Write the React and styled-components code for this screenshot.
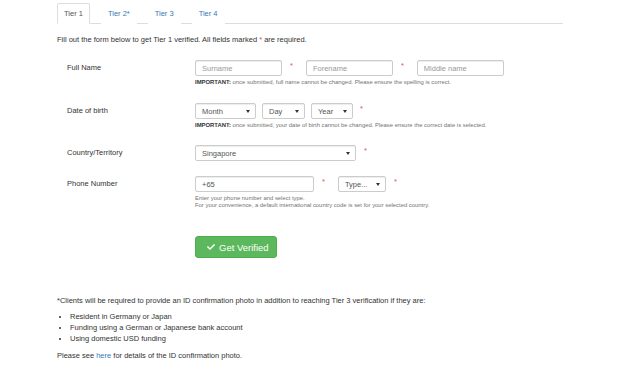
import React from 'react'
import styled, { createGlobalStyle } from 'styled-components'
import { FaCheck } from 'react-icons/fa'

const GlobalStyle = createGlobalStyle`
  body {
    margin: 0;
    background: #fff;
    font-family: 'Liberation Sans', Arial, sans-serif;
    color: #333;
  }
`

const Page = styled.div`
  width: 506px;
  margin-left: 57px;
  padding-top: 3px;
  font-size: 7.5px;
  line-height: 11px;
`

const Tabs = styled.ul`
  display: flex;
  gap: 11px;
  list-style: none;
  margin: 0;
  padding: 0;
  border-bottom: 1px solid #ddd;
`

const Tab = styled.li`
  margin-bottom: -1px;

  a {
    display: block;
    padding: 4px 6px;
    border: 1px solid ${props => props.$active ? '#ddd' : 'transparent'};
    border-bottom-color: ${props => props.$active ? '#fff' : 'transparent'};
    border-radius: 2px 2px 0 0;
    background: #fff;
    color: ${props => props.$active ? '#555' : '#337ab7'};
    text-decoration: none;
  }
`

const Intro = styled.p`
  margin: 8px 0 12px;
`

const Req = styled.span`
  color: #e0534f;
  margin: ${props => props.$inline ? '0' : '-2px 13px 0 8px'};
  line-height: 16px;
`

const FormRow = styled.div`
  display: grid;
  grid-template-columns: 138px 1fr;
  margin-bottom: ${props => props.$mb || 16}px;
`

const Label = styled.label`
  padding-left: 10px;
  line-height: 16px;
`

const Controls = styled.div`
  display: flex;
  flex-direction: column;
`

const Inline = styled.div`
  display: flex;
  align-items: flex-start;
  gap: ${props => props.$gap || 0}px;
`

const Input = styled.input`
  box-sizing: border-box;
  width: ${props => props.$w}px;
  height: 16px;
  padding: 0 6px;
  font-family: inherit;
  font-size: 7.5px;
  color: #555;
  background: #fff;
  border: 1px solid #ccc;
  border-radius: 2px;
  box-shadow: inset 0 1px 1px rgba(0, 0, 0, .075);
  outline: none;

  &::placeholder {
    color: #999;
  }
`

const Select = styled.div`
  box-sizing: border-box;
  width: ${props => props.$w}px;
  height: 16px;
  display: flex;
  align-items: center;
  justify-content: space-between;
  padding: 0 5px 0 6px;
  color: #555;
  background: #fff;
  border: 1px solid #ccc;
  border-radius: 2px;
  box-shadow: inset 0 1px 1px rgba(0, 0, 0, .075);

  &::after {
    content: '';
    border-left: 2px solid transparent;
    border-right: 2px solid transparent;
    border-top: 3px solid #333;
  }
`

const Help = styled.div`
  margin-top: 3px;
  font-size: 5.9px;
  line-height: 7px;
  color: #737373;

  b {
    color: #333;
  }
`

const Button = styled.button`
  display: inline-flex;
  align-items: center;
  gap: 4px;
  box-sizing: border-box;
  width: 82px;
  height: 22px;
  padding: 0 0 0 11px;
  margin: 11px 0 0 138px;
  font-family: inherit;
  font-size: 9.5px;
  color: #fff;
  background: #5cb85c;
  border: 1px solid #4cae4c;
  border-radius: 3px;

  svg {
    width: 8px;
    height: 8px;
  }
`

const Notes = styled.div`
  margin-top: 37px;

  p {
    margin: 0 0 5px;
  }

  ul {
    margin: 0 0 6px;
    padding-left: 13px;
  }

  a {
    color: #337ab7;
    text-decoration: none;
  }
`

const App = () => {
  return (
    <Page>
      <GlobalStyle />
      <Tabs>
        <Tab $active><a href="#">Tier 1</a></Tab>
        <Tab><a href="#">Tier 2*</a></Tab>
        <Tab><a href="#">Tier 3</a></Tab>
        <Tab><a href="#">Tier 4</a></Tab>
      </Tabs>

      <Intro>Fill out the form below to get Tier 1 verified. All fields marked <Req $inline>*</Req> are required.</Intro>

      <FormRow $mb={17}>
        <Label>Full Name</Label>
        <Controls>
          <Inline>
            <Input $w={87} placeholder="Surname" />
            <Req>*</Req>
            <Input $w={87} placeholder="Forename" />
            <Req>*</Req>
            <Input $w={87} placeholder="Middle name" />
          </Inline>
          <Help><b>IMPORTANT:</b> once submitted, full name cannot be changed. Please ensure the spelling is correct.</Help>
        </Controls>
      </FormRow>

      <FormRow>
        <Label>Date of birth</Label>
        <Controls>
          <Inline $gap={6}>
            <Select $w={61}>Month</Select>
            <Select $w={43}>Day</Select>
            <Select $w={42}>Year</Select>
            <Req style={{ marginLeft: 1 }}>*</Req>
          </Inline>
          <Help><b>IMPORTANT:</b> once submitted, your date of birth cannot be changed. Please ensure the correct date is selected.</Help>
        </Controls>
      </FormRow>

      <FormRow $mb={15}>
        <Label>Country/Territory</Label>
        <Controls>
          <Inline>
            <Select $w={161}>Singapore</Select>
            <Req>*</Req>
          </Inline>
        </Controls>
      </FormRow>

      <FormRow>
        <Label>Phone Number</Label>
        <Controls>
          <Inline>
            <Input $w={119} defaultValue="+65" />
            <Req>*</Req>
            <Select $w={48}>Type...</Select>
            <Req>*</Req>
          </Inline>
          <Help>
            Enter your phone number and select type.<br />
            For your convenience, a default international country code is set for your selected country.
          </Help>
        </Controls>
      </FormRow>

      <Button><FaCheck />Get Verified</Button>

      <Notes>
        <p>*Clients will be required to provide an ID confirmation photo in addition to reaching Tier 3 verification if they are:</p>
        <ul>
          <li>Resident in Germany or Japan</li>
          <li>Funding using a German or Japanese bank account</li>
          <li>Using domestic USD funding</li>
        </ul>
        <p>Please see <a href="#">here</a> for details of the ID confirmation photo.</p>
      </Notes>
    </Page>
  )
}

export default App
